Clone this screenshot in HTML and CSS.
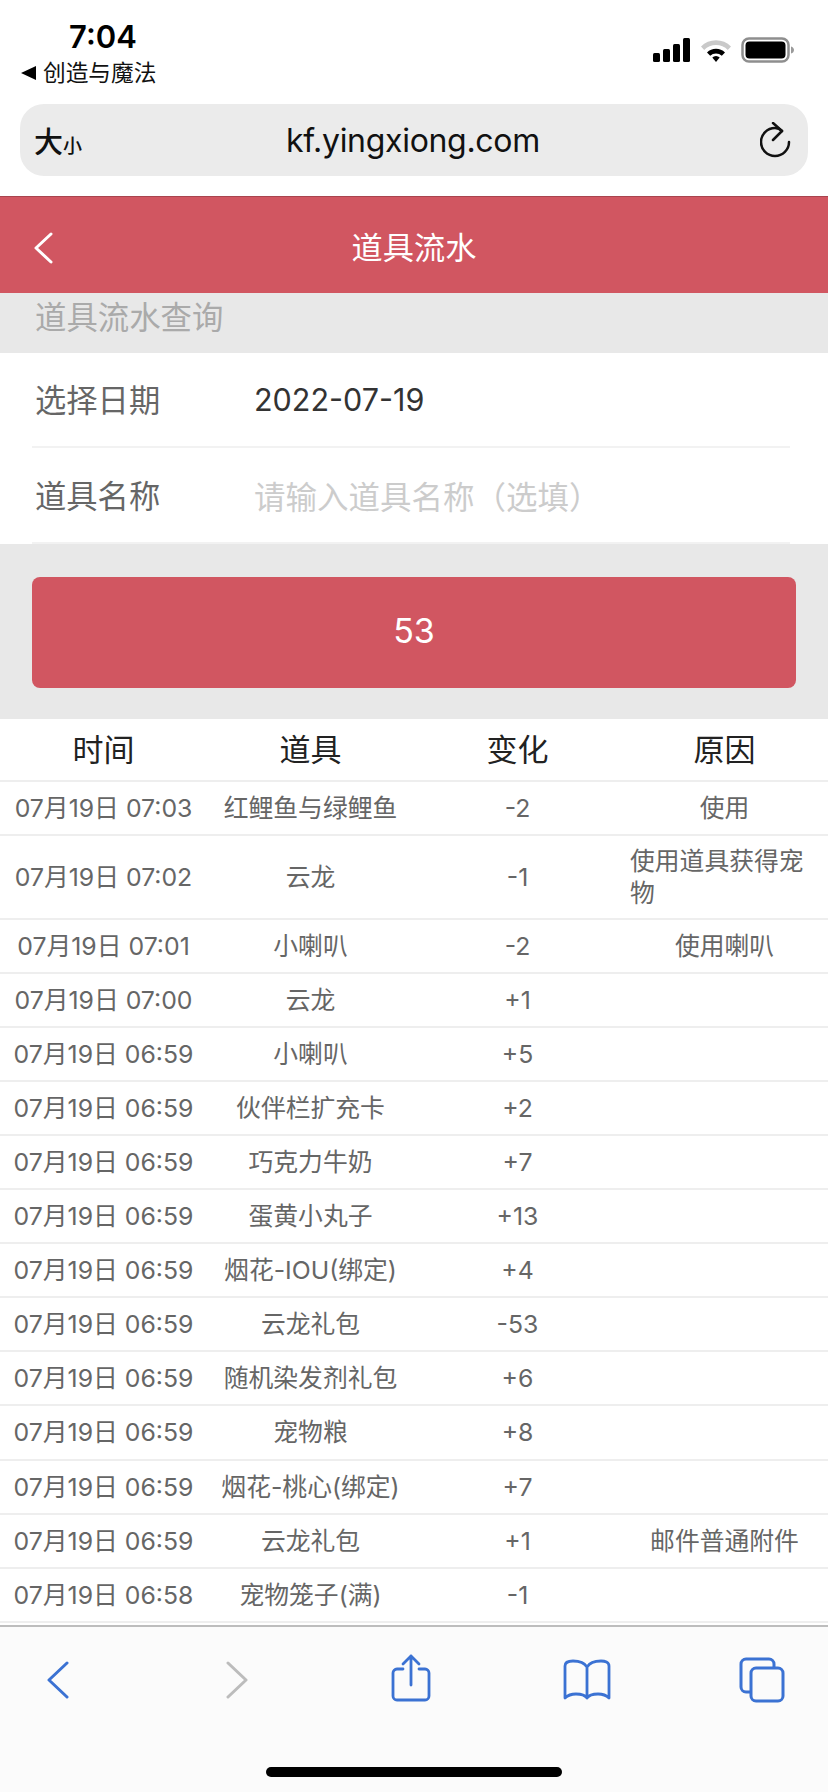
FILE: index.html
```html
<!DOCTYPE html>
<html lang="zh-CN">

<head>
    <meta charset="UTF-8">
    <meta name="viewport" content="width=device-width, initial-scale=1.0">
    <title>道具流水</title>
    <link rel="stylesheet" href="styles.css">
</head>

<body>
    <div class="status-bar">
        <div class="status-left">
            <div class="clock">7:04</div>
            <div class="back-app"><span class="back-arrow"></span>创造与魔法</div>
        </div>
        <div class="status-right">
            <svg width="38" height="24" viewBox="0 0 38 24">
                <rect x="0" y="15" width="7" height="9" rx="1.5" />
                <rect x="10" y="11" width="7" height="13" rx="1.5" />
                <rect x="20" y="6" width="7" height="18" rx="1.5" />
                <rect x="30" y="0" width="7" height="24" rx="1.5" />
            </svg>
            <svg width="32" height="24" viewBox="0 0 32 24">
                <path d="M1 8.500a21 21 0 0 1 30 0l-3.200 3.400a16.500 16.500 0 0 0-23.600 0z" fill="#c9c9c9" />
                <path d="M7 14.500a12.800 12.800 0 0 1 18 0l-3.200 3.300a8.300 8.300 0 0 0-11.600 0z" />
                <path d="M12.300 19.600a5 5 0 0 1 7.400 0L16 24z" />
            </svg>
            <svg width="54" height="26" viewBox="0 0 54 26">
                <rect x="1.500" y="1.500" width="46" height="23" rx="6.500" fill="none" stroke="#8e8e8e" stroke-width="2.500" />
                <rect x="4.500" y="4.500" width="40" height="17" rx="4" />
                <path d="M50 9.500c2 .5 3 2 3 3.500s-1 3-3 3.500z" fill="#9a9a9a" />
            </svg>
        </div>
    </div>

    <div class="address-bar">
        <div class="text-size">大<small>小</small></div>
        <div class="url">kf.yingxiong.com</div>
        <svg class="reload" width="32" height="36" viewBox="0 0 32 36" fill="none" stroke="#111" stroke-width="2.500" stroke-linecap="round" stroke-linejoin="round">
            <path d="M29 20a14 14 0 1 1-14-14c3 0 5 1 7 3" />
            <path d="M13 1l9 8-9 9" />
        </svg>
    </div>

    <header class="page-head">
        <svg class="head-back" width="20" height="32" viewBox="0 0 20 32" fill="none" stroke="#fff" stroke-width="3" stroke-linecap="round" stroke-linejoin="round">
            <path d="M18 2L3 16l15 14" />
        </svg>
        <h1>道具流水</h1>
    </header>

    <div class="group-title">道具流水查询</div>

    <div class="form-group">
        <div class="form-row">
            <label>选择日期</label>
            <span class="value">2022-07-19</span>
        </div>
        <div class="form-row">
            <label>道具名称</label>
            <span class="value placeholder">请输入道具名称（选填）</span>
        </div>
    </div>

    <div class="btn-wrap">
        <button type="button" class="btn">53</button>
    </div>

    <table class="log">
        <thead>
            <tr>
                <th>时间</th>
                <th>道具</th>
                <th>变化</th>
                <th>原因</th>
            </tr>
        </thead>
        <tbody>
            <tr><td>07月19日 07:03</td><td>红鲤鱼与绿鲤鱼</td><td>-2</td><td><span>使用</span></td></tr>
            <tr class="tall"><td>07月19日 07:02</td><td>云龙</td><td>-1</td><td><span>使用道具获得宠物</span></td></tr>
            <tr><td>07月19日 07:01</td><td>小喇叭</td><td>-2</td><td><span>使用喇叭</span></td></tr>
            <tr><td>07月19日 07:00</td><td>云龙</td><td>+1</td><td></td></tr>
            <tr><td>07月19日 06:59</td><td>小喇叭</td><td>+5</td><td></td></tr>
            <tr><td>07月19日 06:59</td><td>伙伴栏扩充卡</td><td>+2</td><td></td></tr>
            <tr><td>07月19日 06:59</td><td>巧克力牛奶</td><td>+7</td><td></td></tr>
            <tr><td>07月19日 06:59</td><td>蛋黄小丸子</td><td>+13</td><td></td></tr>
            <tr><td>07月19日 06:59</td><td>烟花-IOU(绑定)</td><td>+4</td><td></td></tr>
            <tr><td>07月19日 06:59</td><td>云龙礼包</td><td>-53</td><td></td></tr>
            <tr><td>07月19日 06:59</td><td>随机染发剂礼包</td><td>+6</td><td></td></tr>
            <tr><td>07月19日 06:59</td><td>宠物粮</td><td>+8</td><td></td></tr>
            <tr><td>07月19日 06:59</td><td>烟花-桃心(绑定)</td><td>+7</td><td></td></tr>
            <tr><td>07月19日 06:59</td><td>云龙礼包</td><td>+1</td><td><span>邮件普通附件</span></td></tr>
            <tr><td>07月19日 06:58</td><td>宠物笼子(满)</td><td>-1</td><td></td></tr>
        </tbody>
    </table>

    <footer class="toolbar">
        <div class="tools">
            <svg class="tool-back" width="24" height="38" viewBox="0 0 24 38" fill="none" stroke="#3b72d3" stroke-width="3" stroke-linecap="round" stroke-linejoin="round">
                <path d="M21 2L3 19l18 17" />
            </svg>
            <svg class="tool-next" width="24" height="38" viewBox="0 0 24 38" fill="none" stroke="#bcbcbc" stroke-width="3" stroke-linecap="round" stroke-linejoin="round">
                <path d="M3 2l18 17L3 36" />
            </svg>
            <svg class="tool-share" width="40" height="48" viewBox="0 0 40 48" fill="none" stroke="#3b72d3" stroke-width="2.800" stroke-linecap="round" stroke-linejoin="round">
                <path d="M12 15H6a4 4 0 0 0-4 4v23a4 4 0 0 0 4 4h28a4 4 0 0 0 4-4V19a4 4 0 0 0-4-4h-6" />
                <path d="M20 31V2M12 10l8-8 8 8" />
            </svg>
            <svg class="tool-book" width="48" height="42" viewBox="0 0 48 42" fill="none" stroke="#3b72d3" stroke-width="2.800" stroke-linecap="round" stroke-linejoin="round">
                <path d="M24 8C21 3 16 2 10 2 6 2 2 3 2 7v32c3-3 7-4 11-4 5 0 9 1 11 4 2-3 6-4 11-4 4 0 8 1 11 4V7c0-4-4-5-8-5-6 0-11 1-14 6zM24 8v31" />
            </svg>
            <svg class="tool-tabs" width="46" height="46" viewBox="0 0 46 46" fill="none" stroke="#3b72d3" stroke-width="3" stroke-linejoin="round">
                <path d="M35 10V7a5 5 0 0 0-5-5H7a5 5 0 0 0-5 5v23a5 5 0 0 0 5 5h4" />
                <rect x="12" y="11" width="32" height="33" rx="5" />
            </svg>
        </div>
        <div class="home-bar"></div>
    </footer>
</body>

</html>
```

FILE: styles.css
```css
* {
    box-sizing: border-box;
}

html,
body {
    height: 100%;
}

body {
    margin: 0;
    overflow: hidden;
    background-color: #fff;
    font-family: Inter, 'Noto Sans CJK SC', sans-serif;
}

.status-bar {
    height: 104px;
    display: flex;
    justify-content: space-between;
    padding: 20px 33px 0 21px;
}

.clock {
    width: 164px;
    text-align: center;
    font-size: 31px;
    line-height: 34px;
    font-weight: 600;
    color: #000;
}

.back-app {
    display: flex;
    align-items: center;
    margin-top: 5px;
    font-size: 22.700px;
    line-height: 28px;
    color: #111;
}

.back-arrow {
    width: 0;
    height: 0;
    margin-right: 7px;
    border-top: 7px solid transparent;
    border-bottom: 7px solid transparent;
    border-right: 15px solid #000;
}

.status-right {
    display: flex;
    align-items: center;
    align-self: flex-start;
    gap: 9px;
    padding-top: 17px;
}

.status-right svg {
    display: block;
}

.address-bar {
    height: 72px;
    margin: 0 20px;
    display: grid;
    grid-template-columns: 1fr auto 1fr;
    align-items: center;
    padding: 0 16px 0 14px;
    border-radius: 24px;
    background-color: #ebebeb;
    color: #111;
}

.text-size {
    font-size: 29px;
    font-weight: 500;
}

.text-size small {
    font-size: 19px;
}

.url {
    font-size: 32px;
    letter-spacing: -0.3px;
}

.reload {
    justify-self: end;
}

.page-head {
    height: 97px;
    margin-top: 20px;
    display: flex;
    align-items: center;
    justify-content: center;
    position: relative;
    border-top: 1px solid #a8444e;
    background-color: #d15661;
}

.page-head h1 {
    margin: 0;
    font-size: 31.200px;
    font-weight: normal;
    color: #fff;
}

.head-back {
    position: absolute;
    left: 33px;
    top: 35px;
}

.group-title {
    height: 60px;
    padding: 3px 35px 0;
    background-color: #e8e8e8;
    font-size: 31.400px;
    line-height: 44px;
    color: #aaa;
}

.form-group {
    background-color: #fff;
    padding: 0 38px 0 32px;
}

.form-row {
    height: 96px;
    display: flex;
    align-items: center;
    padding-left: 3px;
    border-bottom: 2px solid #f2f2f2;
    font-size: 31.300px;
}

.form-row:first-child {
    height: 95px;
}

.form-row label {
    width: 219px;
    padding-bottom: 2px;
    color: #666;
}

.value {
    color: #333;
    font-size: 30.500px;
}

.placeholder {
    color: #ccc;
    font-size: 31.500px;
}

.btn-wrap {
    height: 175px;
    padding: 33px 32px 0;
    background-color: #e8e8e8;
}

.btn {
    display: block;
    width: 100%;
    height: 111px;
    padding: 0 0 4px;
    border: none;
    border-radius: 8px;
    background-color: #d15661;
    color: #fff;
    font-family: inherit;
    font-size: 34px;
}

.log {
    width: 100%;
    table-layout: fixed;
    border-collapse: collapse;
    text-align: center;
}

.log th {
    height: 62px;
    padding: 0 0 4px;
    border-bottom: 2px solid #eee;
    font-size: 31px;
    font-weight: normal;
    color: #222;
}

.log td {
    height: 54.060px;
    padding: 0 9px;
    border-bottom: 2px solid #eee;
    font-size: 24.800px;
    line-height: 32px;
    color: #666;
    white-space: nowrap;
}

.log td:last-child {
    white-space: normal;
}

.log td span {
    display: inline-block;
    text-align: left;
}

.log .tall td {
    height: 84px;
}

.toolbar {
    height: 169px;
    margin-top: 2px;
    border-top: 2px solid #bdbdbd;
    background-color: #fbfbfb;
}

.tools {
    height: 140px;
    position: relative;
}

.tools svg {
    position: absolute;
}

.tool-back {
    left: 46px;
    top: 34px;
}

.tool-next {
    left: 225px;
    top: 34px;
}

.tool-share {
    left: 391px;
    top: 27px;
}

.tool-book {
    left: 563px;
    top: 32px;
}

.tool-tabs {
    left: 739px;
    top: 30px;
}

.home-bar {
    width: 296px;
    height: 10px;
    margin: 0 auto;
    border-radius: 5px;
    background-color: #000;
}
```
